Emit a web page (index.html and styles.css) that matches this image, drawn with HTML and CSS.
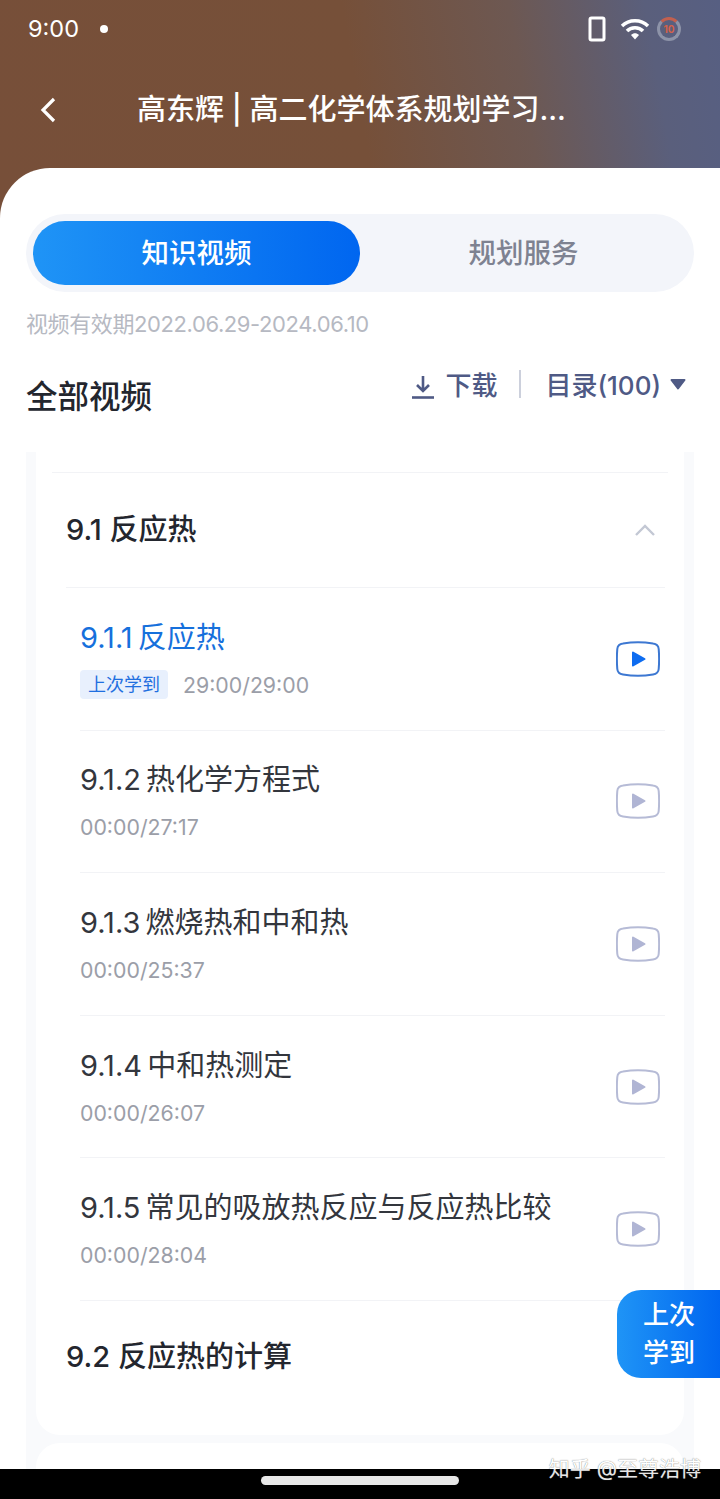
FILE: index.html
```html
<!DOCTYPE html>
<html lang="zh-CN">

<head>
    <meta charset="UTF-8">
    <meta name="viewport" content="width=device-width, initial-scale=1.0">
    <title>高东辉 | 高二化学体系规划学习</title>
    <link rel="stylesheet" href="styles.css">
</head>

<body>
    <div class="page">
        <div class="screen">
            <header class="top">
                <div class="status-bar">
                    <span class="time">9:00</span>
                    <span class="dot"></span>
                    <div class="status-icons">
                        <svg class="ic-phone" width="18" height="26" viewBox="0 0 18 26">
                            <rect x="2" y="2" width="14" height="22" rx="1.5" fill="none" stroke="#fff" stroke-width="3" />
                        </svg>
                        <svg class="ic-wifi" width="30" height="24" viewBox="0 0 30 24">
                            <path d="M2 9 C9 2 21 2 28 9" fill="none" stroke="#fff" stroke-width="3.4" />
                            <path d="M7 14 C11 9.6 19 9.6 23 14" fill="none" stroke="#fff" stroke-width="3.4" />
                            <path d="M11 18 C13.5 15.6 16.5 15.6 19 18 L15 22.5 Z" fill="#fff" />
                        </svg>
                        <span class="timer">10</span>
                    </div>
                </div>
                <div class="nav">
                    <svg class="back" width="18" height="28" viewBox="0 0 18 28">
                        <path d="M15 3 L4 14 L15 25" fill="none" stroke="#fff" stroke-width="3.2" />
                    </svg>
                    <h1 class="nav-title">高东辉 | 高二化学体系规划学习...</h1>
                </div>
            </header>

            <main class="sheet">
                <div class="tabs">
                    <div class="tab active">知识视频</div>
                    <div class="tab">规划服务</div>
                </div>
                <p class="valid">视频有效期2022.06.29-2024.06.10</p>

                <div class="list-head">
                    <h2 class="list-title">全部视频</h2>
                    <div class="tools">
                        <svg class="ic-down" width="24" height="24" viewBox="0 0 24 24">
                            <path d="M12 1 V15 M6 10 L12 16 L18 10" fill="none" stroke="#4f5a85" stroke-width="2.6" />
                            <path d="M1 22.5 H23" stroke="#4f5a85" stroke-width="2.6" />
                        </svg>
                        <span class="tool-text">下载</span>
                        <span class="tool-sep"></span>
                        <span class="tool-text">目录(100)</span>
                        <svg class="ic-caret" width="16" height="12" viewBox="0 0 16 12">
                            <path d="M1.5 2 H14.5 L8 10.5 Z" fill="#4f5a85" stroke="#4f5a85" stroke-width="2" stroke-linejoin="round" />
                        </svg>
                    </div>
                </div>

                <div class="outer">
                    <div class="card">
                        <div class="first-line"></div>
                        <div class="chapter">
                            <span class="chapter-name">9.1 反应热</span>
                            <svg width="22" height="14" viewBox="0 0 22 14">
                                <path d="M2 12 L11 3 L20 12" fill="none" stroke="#c3c8d4" stroke-width="2.4" />
                            </svg>
                        </div>
                        <ul class="lessons">
                            <li class="lesson current">
                                <div class="lesson-info">
                                    <div class="lesson-name">9.1.1 反应热</div>
                                    <div class="lesson-meta"><span class="tag">上次学到</span>29:00/29:00</div>
                                </div>
                                <svg class="ic-play" width="44" height="36" viewBox="0 0 44 36">
                                    <path class="frame" d="M7 2.5 C16 1 28 1 37 2.5 C40.5 3 42.5 5 42.7 8 C43.2 14 43.2 22 42.7 28 C42.5 31 40.5 33 37 33.5 C28 35 16 35 7 33.5 C3.5 33 1.5 31 1.3 28 C.8 22 .8 14 1.3 8 C1.5 5 3.5 3 7 2.5 Z" />
                                    <path class="tri" d="M17 11.5 L28.5 18 L17 24.5 Z" />
                                </svg>
                            </li>
                            <li class="lesson">
                                <div class="lesson-info">
                                    <div class="lesson-name">9.1.2 热化学方程式</div>
                                    <div class="lesson-meta">00:00/27:17</div>
                                </div>
                                <svg class="ic-play" width="44" height="36" viewBox="0 0 44 36">
                                    <path class="frame" d="M7 2.5 C16 1 28 1 37 2.5 C40.5 3 42.5 5 42.7 8 C43.2 14 43.2 22 42.7 28 C42.5 31 40.5 33 37 33.5 C28 35 16 35 7 33.5 C3.5 33 1.5 31 1.3 28 C.8 22 .8 14 1.3 8 C1.5 5 3.5 3 7 2.5 Z" />
                                    <path class="tri" d="M17 11.5 L28.5 18 L17 24.5 Z" />
                                </svg>
                            </li>
                            <li class="lesson">
                                <div class="lesson-info">
                                    <div class="lesson-name">9.1.3 燃烧热和中和热</div>
                                    <div class="lesson-meta">00:00/25:37</div>
                                </div>
                                <svg class="ic-play" width="44" height="36" viewBox="0 0 44 36">
                                    <path class="frame" d="M7 2.5 C16 1 28 1 37 2.5 C40.5 3 42.5 5 42.7 8 C43.2 14 43.2 22 42.7 28 C42.5 31 40.5 33 37 33.5 C28 35 16 35 7 33.5 C3.5 33 1.5 31 1.3 28 C.8 22 .8 14 1.3 8 C1.5 5 3.5 3 7 2.5 Z" />
                                    <path class="tri" d="M17 11.5 L28.5 18 L17 24.5 Z" />
                                </svg>
                            </li>
                            <li class="lesson">
                                <div class="lesson-info">
                                    <div class="lesson-name">9.1.4 中和热测定</div>
                                    <div class="lesson-meta">00:00/26:07</div>
                                </div>
                                <svg class="ic-play" width="44" height="36" viewBox="0 0 44 36">
                                    <path class="frame" d="M7 2.5 C16 1 28 1 37 2.5 C40.5 3 42.5 5 42.7 8 C43.2 14 43.2 22 42.7 28 C42.5 31 40.5 33 37 33.5 C28 35 16 35 7 33.5 C3.5 33 1.5 31 1.3 28 C.8 22 .8 14 1.3 8 C1.5 5 3.5 3 7 2.5 Z" />
                                    <path class="tri" d="M17 11.5 L28.5 18 L17 24.5 Z" />
                                </svg>
                            </li>
                            <li class="lesson">
                                <div class="lesson-info">
                                    <div class="lesson-name">9.1.5 常见的吸放热反应与反应热比较</div>
                                    <div class="lesson-meta">00:00/28:04</div>
                                </div>
                                <svg class="ic-play" width="44" height="36" viewBox="0 0 44 36">
                                    <path class="frame" d="M7 2.5 C16 1 28 1 37 2.5 C40.5 3 42.5 5 42.7 8 C43.2 14 43.2 22 42.7 28 C42.5 31 40.5 33 37 33.5 C28 35 16 35 7 33.5 C3.5 33 1.5 31 1.3 28 C.8 22 .8 14 1.3 8 C1.5 5 3.5 3 7 2.5 Z" />
                                    <path class="tri" d="M17 11.5 L28.5 18 L17 24.5 Z" />
                                </svg>
                            </li>
                        </ul>
                        <div class="chapter chapter-last">
                            <span class="chapter-name">9.2 反应热的计算</span>
                        </div>
                    </div>
                    <div class="card card-next"></div>
                </div>
            </main>

            <div class="float-btn">上次<br>学到</div>
        </div>

        <footer class="home-bar">
            <span class="home-pill"></span>
        </footer>
        <div class="watermark">知乎 @至尊浩博</div>
    </div>
</body>

</html>
```

FILE: styles.css
```css
* {
    box-sizing: border-box;
    padding: 0;
    margin: 0;
}

body {
    font-family: Inter, "Noto Sans CJK SC", "Noto Sans", sans-serif;
    color: #23262e;
    background-color: #fff;
}

.page {
    position: relative;
    width: 720px;
    height: 1499px;
    overflow: hidden;
    display: flex;
    flex-direction: column;
}

.screen {
    position: relative;
    flex: 1;
    overflow: hidden;
    background: linear-gradient(80deg, #774f39 0%, #765039 50%, #6d5852 72%, #5a5f7c 90%, #575f82 100%) no-repeat;
    background-size: 100% 220px;
}

/* top */
.top {
    height: 168px;
    color: #fff;
}

.status-bar {
    height: 58px;
    padding: 0 39px 0 28px;
    display: flex;
    align-items: center;
}

.time {
    font-size: 23.5px;
    line-height: 58px;
}

.dot {
    width: 8px;
    height: 8px;
    margin-left: 21px;
    border-radius: 50%;
    background-color: #fff;
}

.status-icons {
    margin-left: auto;
    display: flex;
    align-items: center;
}

.ic-wifi {
    margin-left: 14px;
}

.timer {
    width: 24px;
    height: 24px;
    margin-left: 7px;
    border: 3px solid #8d93a8;
    border-top-color: #c2604f;
    border-radius: 50%;
    font-size: 10px;
    font-weight: 700;
    line-height: 18px;
    text-align: center;
    color: #d4614a;
}

.nav {
    height: 104px;
    padding-left: 39px;
    display: flex;
    align-items: center;
}

.nav-title {
    margin-left: 80px;
    font-size: 29px;
    font-weight: 500;
    line-height: 40px;
    white-space: nowrap;
}

/* sheet */
.sheet {
    height: 1301px;
    padding: 46px 26px 0;
    background-color: #fff;
    border-top-left-radius: 50px;
}

.tabs {
    height: 78px;
    padding: 7px;
    display: flex;
    border-radius: 39px;
    background-color: #f3f5fa;
}

.tab {
    width: 327px;
    border-radius: 32px;
    font-size: 27.5px;
    font-weight: 500;
    line-height: 64px;
    text-align: center;
    color: #7e8291;
}

.tab.active {
    color: #fff;
    background: linear-gradient(90deg, #1f94f6, #0066f0);
}

.valid {
    margin-top: 16px;
    font-size: 22px;
    line-height: 32px;
    letter-spacing: -.4px;
    color: #b6b9c2;
}

.list-head {
    height: 80px;
    margin-top: 12px;
    display: flex;
    justify-content: space-between;
}

.list-title {
    margin-top: 23px;
    font-size: 31.5px;
    font-weight: 500;
    line-height: 44px;
}

.tools {
    height: 62px;
    padding-right: 8px;
    display: flex;
    align-items: center;
    color: #4f5a85;
}

.tool-text {
    font-size: 26px;
    font-weight: 500;
}

.ic-down {
    margin-top: 8px;
    margin-right: 10px;
}

.tool-sep {
    width: 2px;
    height: 28px;
    margin: 2px 24px 0 22px;
    background-color: #ccd0dc;
}

.ic-caret {
    margin-top: 2px;
    margin-left: 9px;
}

/* list */
.outer {
    height: 1100px;
    margin-top: 20px;
    padding: 0 10px;
    background-color: #f9fafc;
}

.card {
    height: 983px;
    padding: 20px 19px 0 16px;
    border-radius: 0 0 24px 24px;
    background-color: #fff;
}

.card-next {
    height: 100px;
    margin-top: 8px;
    border-radius: 24px 24px 0 0;
}

.first-line {
    height: 1px;
    margin: 0 -3px 0 0;
    background-color: #f2f3f6;
}

.chapter {
    height: 115px;
    margin-left: 14px;
    padding-right: 9px;
    display: flex;
    align-items: center;
    justify-content: space-between;
    border-bottom: 1px solid #f2f3f6;
}

.chapter-name {
    margin-bottom: 6px;
    font-size: 29px;
    font-weight: 500;
}

.chapter-last {
    padding-bottom: 2px;
    border-bottom: 0;
}

.lessons {
    list-style: none;
    padding-left: 28px;
}

.lesson {
    height: 142.6px;
    padding-right: 5px;
    display: flex;
    align-items: center;
    justify-content: space-between;
    border-bottom: 1px solid #f2f3f6;
}

.lesson-name {
    font-size: 29px;
    line-height: 40px;
    word-spacing: -3px;
    color: #33363d;
}

.lesson-meta {
    margin-top: 12px;
    display: flex;
    align-items: center;
    font-size: 21.3px;
    line-height: 30px;
    color: #9b9ea8;
}

.tag {
    margin-right: 15px;
    padding: 0 8px;
    border-radius: 4px;
    font-size: 18px;
    line-height: 29px;
    color: #1f6fe0;
    background-color: #e8f0fd;
}

.ic-play .frame {
    fill: none;
    stroke: #b6bbd6;
    stroke-width: 2;
}

.ic-play .tri {
    fill: #b0b5d4;
    stroke: #b0b5d4;
    stroke-width: 2;
    stroke-linejoin: round;
}

.current .lesson-name {
    color: #1670dc;
}

.current .frame {
    stroke: #3d78d2;
}

.current .tri {
    fill: #0e6cf0;
    stroke: #0e6cf0;
}

.float-btn {
    position: absolute;
    top: 1290px;
    right: 0;
    width: 103px;
    height: 88px;
    padding: 6px 0 0 1px;
    border-radius: 24px 0 0 24px;
    font-size: 26px;
    font-weight: 500;
    line-height: 38px;
    text-align: center;
    color: #fff;
    background: linear-gradient(90deg, #1f94f6, #0066f0);
}

/* bottom */
.home-bar {
    height: 30px;
    padding-top: 7px;
    display: flex;
    justify-content: center;
    background-color: #000;
}

.home-pill {
    width: 198px;
    height: 9px;
    border-radius: 5px;
    background-color: #e8e8e8;
}

.watermark {
    position: absolute;
    top: 1453px;
    right: 19px;
    font-size: 21px;
    line-height: 32px;
    color: #fff;
    opacity: .9;
    text-shadow: 0 0 1px #555;
}
```
